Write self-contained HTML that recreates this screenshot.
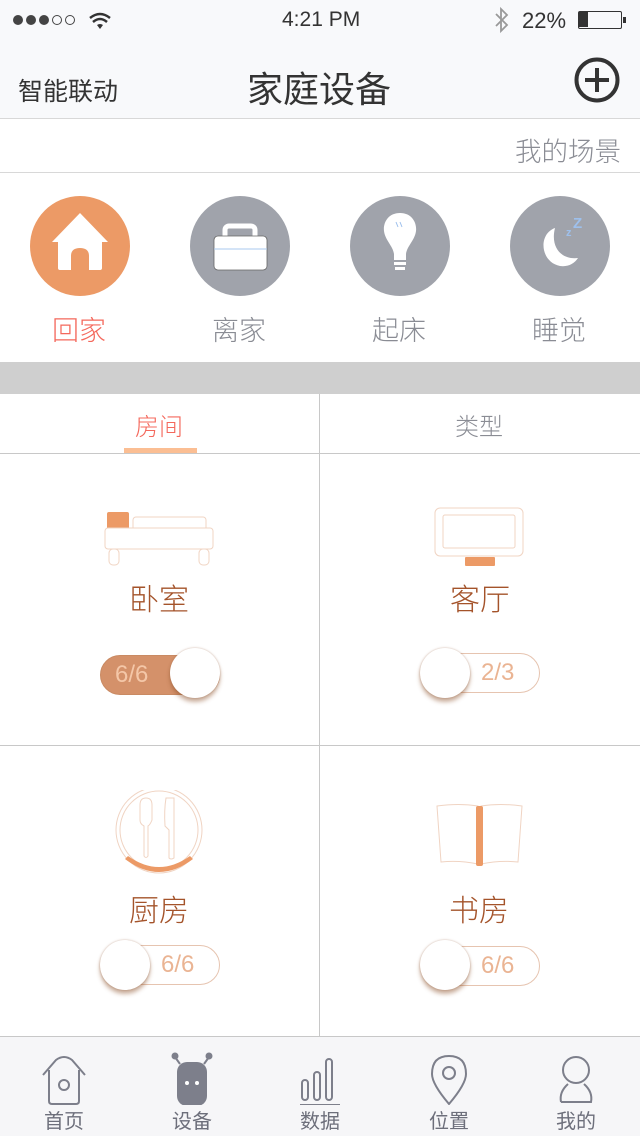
<!DOCTYPE html>
<html><head><meta charset="utf-8"><style>
*{margin:0;padding:0;box-sizing:border-box}
body{width:640px;height:1136px;background:#fff;font-family:"Liberation Sans","Noto Sans CJK SC",sans-serif;position:relative;overflow:hidden}
.a{position:absolute}
.t{position:absolute;white-space:nowrap;font-family:"Noto Sans CJK SC","Liberation Sans",sans-serif;font-weight:300}
.circ{position:absolute;width:100px;height:100px;border-radius:50%;top:196px}
.pill{position:absolute;width:120px;height:40px;border-radius:20px;border:1px solid #e6c4b0;font-family:"Liberation Sans",sans-serif;font-size:24px;color:#eab493;line-height:38px}
.knob{position:absolute;width:50px;height:50px;border-radius:50%;background:#fff;box-shadow:0 4px 4px rgba(140,80,40,.45),0 0 2px rgba(160,110,80,.5)}
.room{font-size:30px;color:#a4532a}
</style></head><body>
<div class="a" style="left:0;top:0;width:640px;height:119px;background:#f8f9fb;border-bottom:1px solid #d8d8d8"></div>
<svg class="a" style="left:12px;top:10px" width="110" height="22">
<circle cx="6" cy="10" r="5" fill="#444"/><circle cx="19" cy="10" r="5" fill="#444"/><circle cx="32" cy="10" r="5" fill="#444"/>
<circle cx="45" cy="10" r="4.5" fill="none" stroke="#444" stroke-width="1"/><circle cx="58" cy="10" r="4.5" fill="none" stroke="#444" stroke-width="1"/>
<path d="M78 8 Q88 0 98 8" stroke="#333" stroke-width="2.5" fill="none"/><path d="M81 12 Q88 6 95 12" stroke="#333" stroke-width="2.5" fill="none"/><path d="M85 15 L88 19 L91 15 Q88 13 85 15Z" fill="#333"/>
</svg>
<div class="a" style="left:282px;top:8px;font-size:21px;color:#333">4:21 PM</div>
<svg class="a" style="left:492px;top:6px" width="20" height="28"><path d="M4 8 L15 19 L9 25 L9 3 L15 9 L4 20" stroke="#999" stroke-width="1.8" fill="none"/></svg>
<div class="a" style="left:522px;top:8px;font-size:22px;color:#333">22%</div>
<div class="a" style="left:578px;top:11px;width:44px;height:18px;border:1.5px solid #333;border-radius:2px"><div style="width:9px;height:15px;background:#333"></div></div>
<div class="a" style="left:623px;top:17px;width:3px;height:6px;background:#333"></div>
<div class="t" style="left:18px;top:72px;font-size:25px;color:#333;font-weight:400">智能联动</div>
<div class="t" style="left:247px;top:61px;font-size:36px;color:#333;font-weight:400">家庭设备</div>
<svg class="a" style="left:573px;top:57px" width="48" height="48"><circle cx="24" cy="23" r="20.5" fill="none" stroke="#333" stroke-width="4"/><path d="M24 11V35M12 23H36" stroke="#333" stroke-width="4"/></svg>
<div class="t" style="left:515px;top:130px;font-size:26.5px;color:#8a8c94">我的场景</div>
<div class="a" style="left:0;top:172px;width:640px;height:1px;background:#d8d8d8"></div>
<div class="circ" style="left:30px;background:#ec9a66"></div>
<svg class="a" style="left:30px;top:196px" width="100" height="100"><path d="M50 17 L78 46 L72 46 L72 72 Q72 74 70 74 L59 74 L59 60 Q59 52 50 52 Q41 52 41 60 L41 74 L30 74 Q28 74 28 72 L28 46 L22 46Z" fill="#fff"/></svg>
<div class="circ" style="left:190px;background:#a0a3ab"></div>
<svg class="a" style="left:190px;top:196px" width="100" height="100"><rect x="35" y="30" width="30" height="16" rx="4" fill="none" stroke="#fff" stroke-width="5"/><rect x="24" y="40" width="53" height="34" rx="4" fill="#fff" stroke="#666" stroke-width=".8"/><path d="M24 53H77" stroke="#a8c8ef" stroke-width="1"/></svg>
<div class="circ" style="left:350px;background:#a0a3ab"></div>
<svg class="a" style="left:350px;top:196px" width="100" height="100"><path d="M50 17 C38 17 33 27 34 35 C35 44 43 50 44 58 L44 64 L56 64 L56 58 C57 50 65 44 66 35 C67 27 62 17 50 17Z" fill="#fff"/><rect x="44" y="66" width="12" height="3" fill="#fff"/><rect x="45" y="71" width="10" height="3" fill="#fff"/><path d="M46 26l2 5M50 26l2 5" stroke="#9ec0ec" stroke-width="1"/></svg>
<div class="circ" style="left:510px;background:#a0a3ab"></div>
<svg class="a" style="left:510px;top:196px" width="100" height="100"><path d="M45 32 C28 38 30 66 50 70 C58 71 64 68 68 62 C52 64 40 52 45 32Z" fill="#fff"/><text x="56" y="40" font-size="11" fill="#9ec0ec" font-family="Liberation Sans" font-weight="bold">z</text><text x="63" y="32" font-size="15" fill="#9ec0ec" font-family="Liberation Sans" font-weight="bold">Z</text></svg>
<div class="t" style="left:52px;top:309px;font-size:27px;color:#f4685c">回家</div>
<div class="t" style="left:212px;top:309px;font-size:27px;color:#8a8c94">离家</div>
<div class="t" style="left:372px;top:309px;font-size:27px;color:#8a8c94">起床</div>
<div class="t" style="left:532px;top:309px;font-size:27px;color:#8a8c94">睡觉</div>
<div class="a" style="left:0;top:362px;width:640px;height:32px;background:#cfcfcf"></div>
<div class="t" style="left:135px;top:407px;font-size:24px;color:#f4685c">房间</div>
<div class="t" style="left:455px;top:407px;font-size:24px;color:#8a8c94">类型</div>
<div class="a" style="left:124px;top:448px;width:73px;height:5px;background:#fbbe93"></div>
<div class="a" style="left:0;top:453px;width:640px;height:1px;background:#c8c8c8"></div>
<div class="a" style="left:319px;top:394px;width:1px;height:643px;background:#c8c8c8"></div>
<div class="a" style="left:0;top:745px;width:640px;height:1px;background:#c8c8c8"></div>
<svg class="a" style="left:100px;top:505px" width="120" height="65"><rect x="7" y="7" width="22" height="20" rx="2" fill="#ec9a66"/><rect x="33" y="12" width="73" height="15" rx="3" fill="none" stroke="#f0d4c3"/><rect x="5" y="23" width="108" height="21" rx="3" fill="#fff" stroke="#f0d4c3"/><rect x="9" y="44" width="10" height="16" rx="4" fill="none" stroke="#f0d4c3"/><rect x="99" y="44" width="10" height="16" rx="4" fill="none" stroke="#f0d4c3"/></svg>
<div class="t room" style="left:129px;top:575px">卧室</div>
<div class="pill" style="left:100px;top:655px;background:#d4916a;border-color:#c98a63;color:#f4c7a8;padding-left:14px">6/6</div>
<div class="knob" style="left:170px;top:648px"></div>
<svg class="a" style="left:430px;top:505px" width="100" height="65"><rect x="5" y="3" width="88" height="48" rx="5" fill="none" stroke="#f0d4c3"/><rect x="13" y="10" width="72" height="33" rx="2" fill="none" stroke="#f0d4c3"/><rect x="35" y="52" width="30" height="9" rx="1" fill="#ec9a66"/></svg>
<div class="t room" style="left:450px;top:575px">客厅</div>
<div class="pill" style="left:420px;top:653px;padding-left:60px">2/3</div>
<div class="knob" style="left:420px;top:648px"></div>
<svg class="a" style="left:110px;top:790px" width="100" height="85"><circle cx="49" cy="40" r="43" fill="none" stroke="#f0d4c3"/><circle cx="49" cy="40" r="39" fill="none" stroke="#f0d4c3"/><path d="M15 69 Q49 95 83 69 L80 66 Q49 88 18 66Z" fill="#ec9a66"/><path d="M30 15 Q30 8 36 8 Q42 8 42 15 L42 30 Q40 35 38 36 L38 66 Q36 69 34 66 L34 36 Q30 34 30 30Z" fill="none" stroke="#f0d4c3"/><path d="M56 8 L64 8 L64 68 Q61 70 59 68 L59 40 L55 36 Q54 20 56 8Z" fill="none" stroke="#f0d4c3"/></svg>
<div class="t room" style="left:129px;top:886px">厨房</div>
<div class="pill" style="left:100px;top:945px;padding-left:60px">6/6</div>
<div class="knob" style="left:100px;top:940px"></div>
<svg class="a" style="left:434px;top:800px" width="92" height="70"><path d="M3 6 Q25 3 44 6 L44 64 Q25 60 7 62Z" fill="none" stroke="#f0d4c3"/><path d="M88 6 Q66 3 47 6 L47 64 Q66 60 84 62Z" fill="none" stroke="#f0d4c3"/><rect x="42" y="6" width="7" height="60" rx="2" fill="#ec9a66"/></svg>
<div class="t room" style="left:449px;top:886px">书房</div>
<div class="pill" style="left:420px;top:946px;padding-left:60px">6/6</div>
<div class="knob" style="left:420px;top:940px"></div>
<div class="a" style="left:0;top:1036px;width:640px;height:100px;background:#f6f6f8;border-top:1.5px solid #c8c8c8"></div>
<svg class="a" style="left:0;top:1050px" width="640" height="55" fill="none" stroke="#7d7f8b" stroke-width="2">
<path d="M43 25 L56 10 Q64 4 72 10 L85 25 M49 20 L49 51 Q49 54 52 54 L76 54 Q79 54 79 51 L79 20"/><circle cx="64" cy="35" r="5"/>
<rect x="177" y="12" width="30" height="44" rx="10" fill="#7d7f8b" stroke="none"/><path d="M180 14 L175 7 M204 14 L209 7"/><circle cx="175" cy="6" r="2.5" fill="#7d7f8b"/><circle cx="209" cy="6" r="2.5" fill="#7d7f8b"/><circle cx="187" cy="33" r="2" fill="#fff" stroke="none"/><circle cx="197" cy="33" r="2" fill="#fff" stroke="none"/>
<rect x="302" y="30" width="6" height="20" rx="3"/><rect x="314" y="22" width="6" height="28" rx="3"/><rect x="326" y="9" width="6" height="41" rx="3"/><path d="M300 55 H340"/>
<path d="M449 54 Q432 34 432 24 Q432 6 449 6 Q466 6 466 24 Q466 34 449 54Z"/><circle cx="449" cy="23" r="6"/>
<circle cx="576" cy="20" r="13"/><path d="M561 52 Q559 42 568 34 M584 34 Q593 42 591 52 L561 52"/>
</svg>
<div class="t" style="left:44px;top:1105px;font-size:20px;color:#6d6f7b;font-weight:400">首页</div>
<div class="t" style="left:172px;top:1105px;font-size:20px;color:#6d6f7b;font-weight:400">设备</div>
<div class="t" style="left:300px;top:1105px;font-size:20px;color:#6d6f7b;font-weight:400">数据</div>
<div class="t" style="left:429px;top:1105px;font-size:20px;color:#6d6f7b;font-weight:400">位置</div>
<div class="t" style="left:556px;top:1105px;font-size:20px;color:#6d6f7b;font-weight:400">我的</div>
</body></html>
